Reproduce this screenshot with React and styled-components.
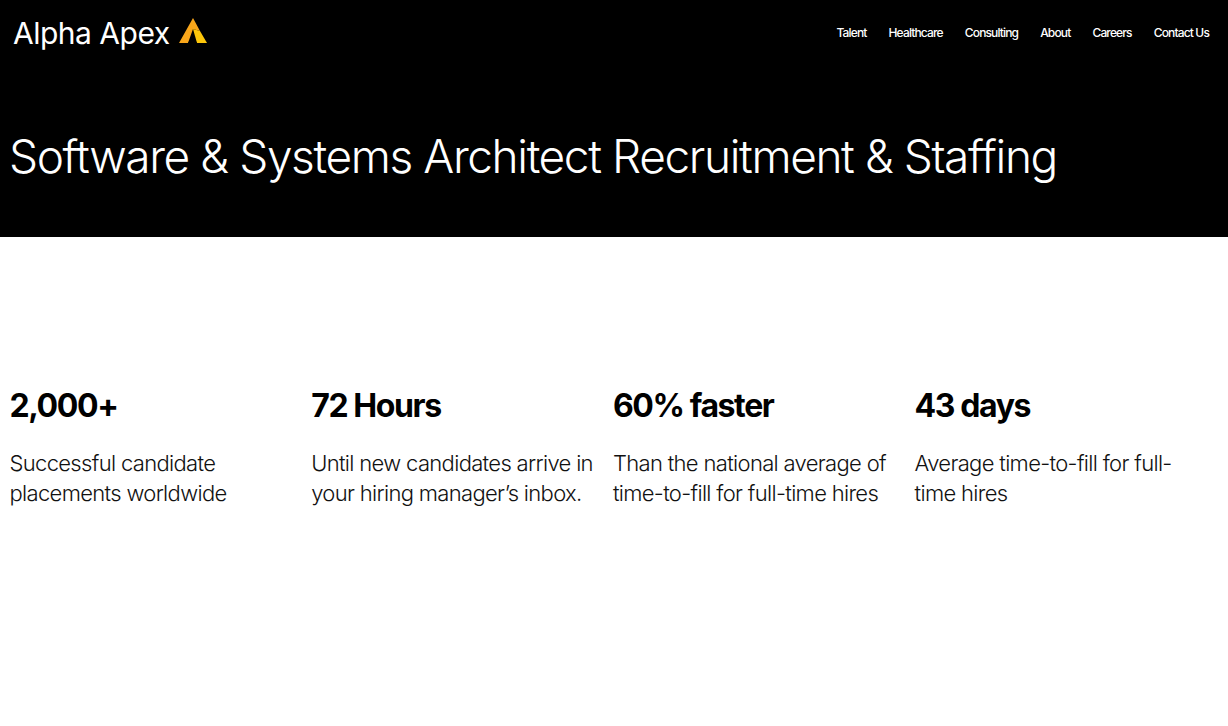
import React from "react";
import styled, { createGlobalStyle } from "styled-components";

const Global = createGlobalStyle`
  body {
    margin: 0;
    background: #ffffff;
    font-family: Inter, "Liberation Sans", sans-serif;
  }
`;

const Hero = styled.header`
  background: #000000;
  height: 237px;
  display: flex;
  flex-direction: column;
  box-sizing: border-box;
`;

const TopBar = styled.div`
  display: flex;
  justify-content: space-between;
  align-items: center;
  height: 65px;
  padding: 0 19px 0 13px;
`;

const Logo = styled.div`
  display: flex;
  align-items: center;
  gap: 9px;
`;

const LogoText = styled.span`
  color: #ffffff;
  font-size: 30px;
  font-weight: 400;
  letter-spacing: -0.5px;
`;

const Mark = styled.svg`
  width: 28px;
  height: 26px;
  margin-bottom: 4px;
`;

const Nav = styled.nav`
  display: flex;
  gap: 22px;
`;

const NavLink = styled.a`
  color: #ffffff;
  font-size: 12px;
  font-weight: 500;
  letter-spacing: -0.85px;
`;

const Title = styled.h1`
  margin: 60px 0 0 9px;
  color: #ffffff;
  font-size: 46px;
  line-height: 62px;
  font-weight: 300;
  letter-spacing: -1.39px;
  white-space: nowrap;
`;

const Stats = styled.section`
  display: grid;
  grid-template-columns: repeat(4, 301.7px);
  padding: 149px 0 0 9.5px;
  height: 489px;
  box-sizing: border-box;
`;

const Stat = styled.div`
  padding-right: 10px;
`;

const Figure = styled.div`
  color: #000000;
  font-size: 32px;
  line-height: 40px;
  font-weight: 700;
  letter-spacing: -1.4px;
`;

const Caption = styled.p`
  margin: 22px 0 0;
  color: #111111;
  font-size: 22px;
  line-height: 30px;
  font-weight: 300;
  letter-spacing: -0.67px;
`;

const links = ["Talent", "Healthcare", "Consulting", "About", "Careers", "Contact Us"];

const stats = [
  ["2,000+", "Successful candidate placements worldwide"],
  ["72 Hours", "Until new candidates arrive in your hiring manager’s inbox."],
  ["60% faster", "Than the national average of time-to-fill for full-time hires"],
  ["43 days", "Average time-to-fill for full-time hires"],
];

function ApexMark() {
  return (
    <Mark viewBox="0 0 28 26">
      <polygon points="14,0 21,13 14,11 9,25 0,25" fill="#f9a61a" />
      <polygon points="14,11 21,13 28,25 18,25" fill="#fdc60a" />
      <polygon points="13.5,18 9,25 18,25" fill="#000000" />
    </Mark>
  );
}

export default function App() {
  return (
    <>
      <Global />
      <Hero>
        <TopBar>
          <Logo>
            <LogoText>Alpha Apex</LogoText>
            <ApexMark />
          </Logo>
          <Nav>
            {links.map((l) => (
              <NavLink key={l}>{l}</NavLink>
            ))}
          </Nav>
        </TopBar>
        <Title>Software &amp; Systems Architect Recruitment &amp; Staffing</Title>
      </Hero>
      <Stats>
        {stats.map(([fig, cap]) => (
          <Stat key={fig}>
            <Figure>{fig}</Figure>
            <Caption>{cap}</Caption>
          </Stat>
        ))}
      </Stats>
    </>
  );
}
